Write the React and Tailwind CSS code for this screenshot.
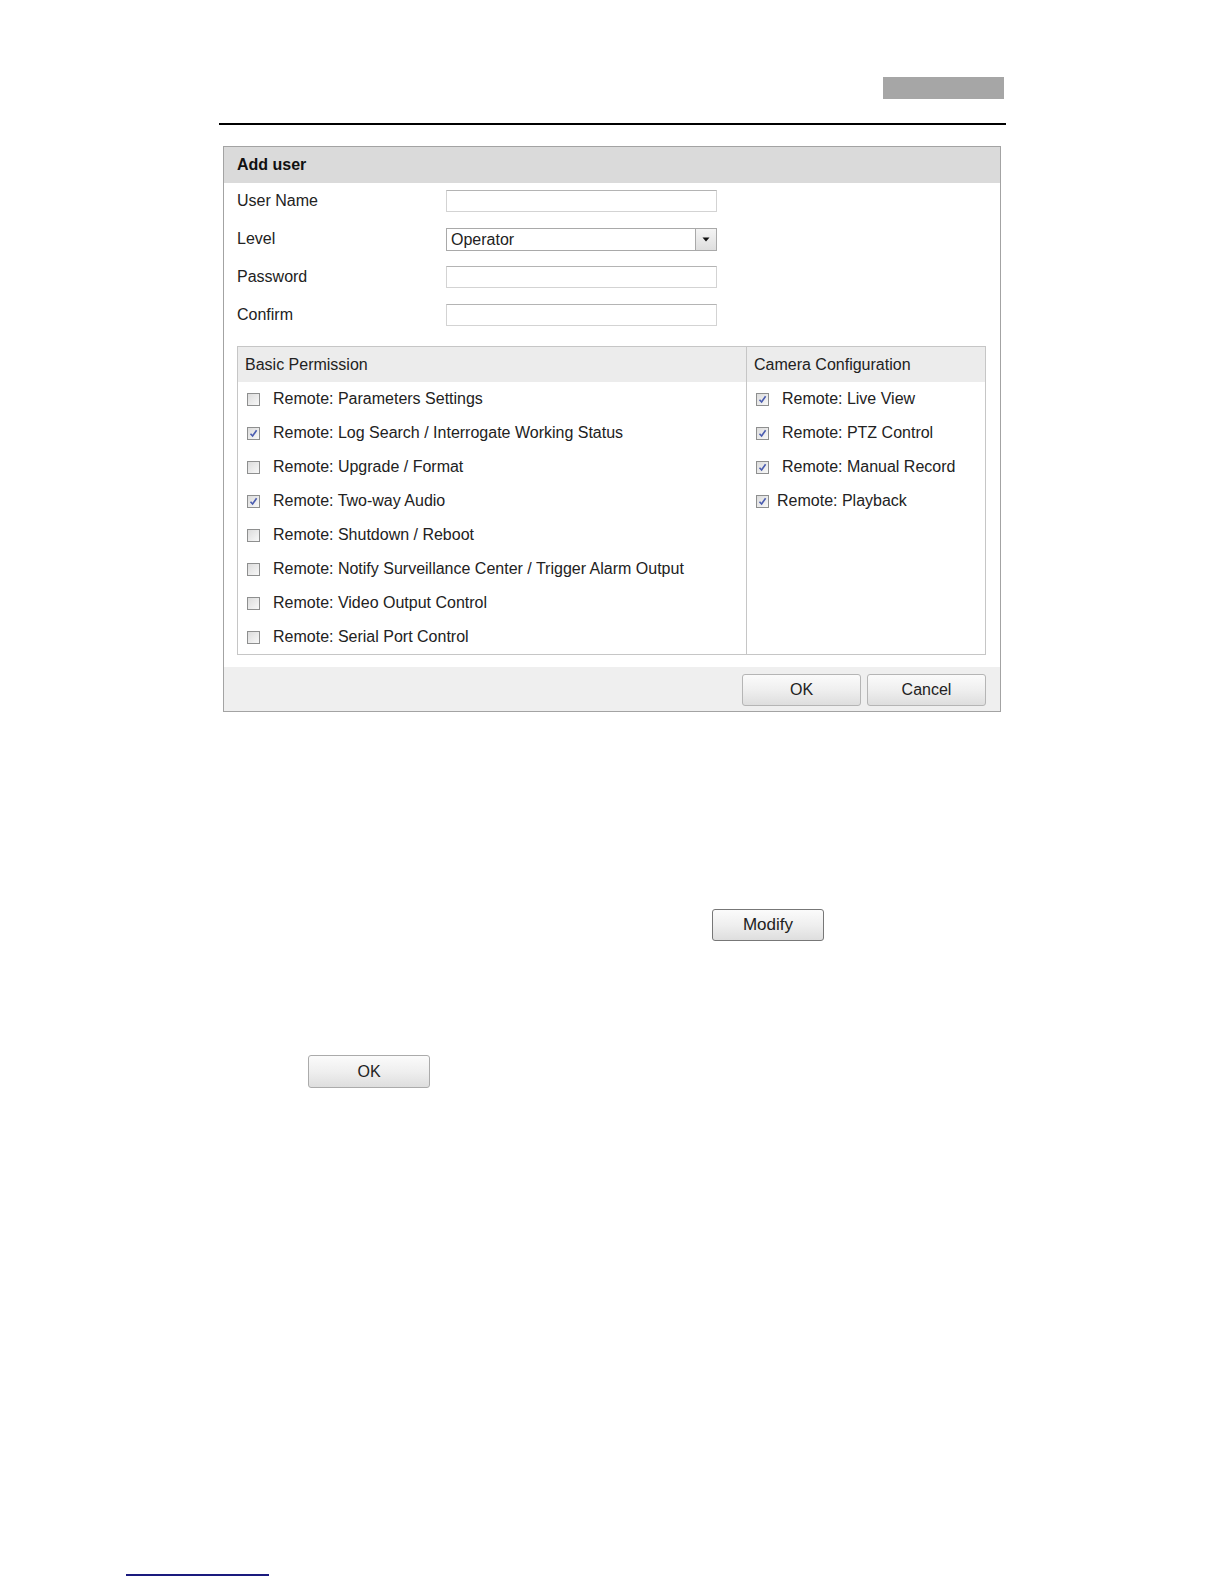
import React from "react";

function Check({ checked }) {
  return (
    <div className="w-[13px] h-[13px] border border-[#8e8f8f] bg-gradient-to-br from-[#dcdcdc] to-[#f8f8f8] flex items-center justify-center shrink-0">
      {checked && (
        <svg width="9" height="9" viewBox="0 0 9 9">
          <path d="M1.5 4.8 L3.6 7 L7.6 1.2" fill="none" stroke="#4a5cb0" strokeWidth="1.6" />
        </svg>
      )}
    </div>
  );
}

function Btn({ children, className }) {
  return (
    <div
      className={
        "flex items-center justify-center rounded-[3px] bg-gradient-to-b from-[#fbfbfb] via-[#efefef] to-[#dedede] text-[16px] text-[#222] " +
        className
      }
    >
      {children}
    </div>
  );
}

const basic = [
  ["Remote: Parameters Settings", false],
  ["Remote: Log Search / Interrogate Working Status", true],
  ["Remote: Upgrade / Format", false],
  ["Remote: Two-way Audio", true],
  ["Remote: Shutdown / Reboot", false],
  ["Remote: Notify Surveillance Center / Trigger Alarm Output", false],
  ["Remote: Video Output Control", false],
  ["Remote: Serial Port Control", false],
];

const camera = [
  ["Remote: Live View", "ml-[13px]"],
  ["Remote: PTZ Control", "ml-[13px]"],
  ["Remote: Manual Record", "ml-[13px]"],
  ["Remote: Playback", "ml-[8px]"],
];

export default function App() {
  return (
    <div className="w-[1224px] h-[1584px] bg-white font-['Liberation_Sans',Arial,sans-serif] text-[#222] flex flex-col">
      <div className="pt-[77px] pl-[883px]">
        <div className="w-[121px] h-[22px] bg-[#a6a6a6]" />
      </div>
      <div className="mt-[24px] ml-[219px] w-[787px] h-[2px] bg-black" />

      <div className="mt-[21px] ml-[223px] w-[778px] border border-[#a3a3a3]">
        <div className="h-[36px] bg-[#dadada] pl-[13px] flex items-center font-bold text-[16px] text-[#111]">
          Add user
        </div>
        <div className="pt-[7px] pl-[13px] flex flex-col text-[16px]">
          {["User Name", "Level", "Password", "Confirm"].map((l) => (
            <div key={l} className="h-[38px] flex items-start">
              <div className="w-[209px] h-[22px] flex items-center">{l}</div>
              {l === "Level" ? (
                <div className="w-[271px] h-[23px] border border-[#a9a9a9] flex items-center">
                  <div className="flex-1 pl-[4px] pt-[1px]">Operator</div>
                  <div className="w-[21px] h-full border-l border-[#a9a9a9] bg-gradient-to-b from-[#f4f4f4] to-[#dedede] flex items-center justify-center">
                    <svg width="8" height="5" viewBox="0 0 8 5">
                      <path d="M0.5 0.5 H7.5 L4 4.5 Z" fill="#111" />
                    </svg>
                  </div>
                </div>
              ) : (
                <div className="w-[271px] h-[22px] border border-[#d3d3d3] border-t-[#b4b4b4]" />
              )}
            </div>
          ))}
        </div>

        <div className="mt-[4px] ml-[13px] w-[749px] h-[309px] border border-[#c6c6c6] flex text-[16px]">
          <div className="w-[509px] border-r border-[#c6c6c6] flex flex-col">
            <div className="h-[35px] bg-[#ececec] pl-[7px] flex items-center">Basic Permission</div>
            {basic.map(([t, c]) => (
              <div key={t} className="h-[34px] flex items-center pl-[9px]">
                <Check checked={c} />
                <span className="ml-[13px]">{t}</span>
              </div>
            ))}
          </div>
          <div className="flex-1 flex flex-col">
            <div className="h-[35px] bg-[#ececec] pl-[7px] flex items-center">Camera Configuration</div>
            {camera.map(([t, m]) => (
              <div key={t} className="h-[34px] flex items-center pl-[9px]">
                <Check checked />
                <span className={m}>{t}</span>
              </div>
            ))}
          </div>
        </div>

        <div className="mt-[12px] h-[44px] bg-[#efefef] flex justify-end items-start pt-[7px] pr-[14px] gap-[6px]">
          <Btn className="w-[119px] h-[32px] border border-[#b5b5b5]">OK</Btn>
          <Btn className="w-[119px] h-[32px] border border-[#b5b5b5]">Cancel</Btn>
        </div>
      </div>

      <div className="mt-[197px] ml-[712px]">
        <Btn className="w-[112px] h-[32px] border border-[#777] text-[17px] text-[#1c1c3a]">Modify</Btn>
      </div>

      <div className="mt-[114px] ml-[308px]">
        <Btn className="w-[122px] h-[33px] border border-[#ababab]">OK</Btn>
      </div>

      <div className="mt-[486px] ml-[126px] w-[143px] h-[2px] bg-[#1a1a7e]" />
    </div>
  );
}
